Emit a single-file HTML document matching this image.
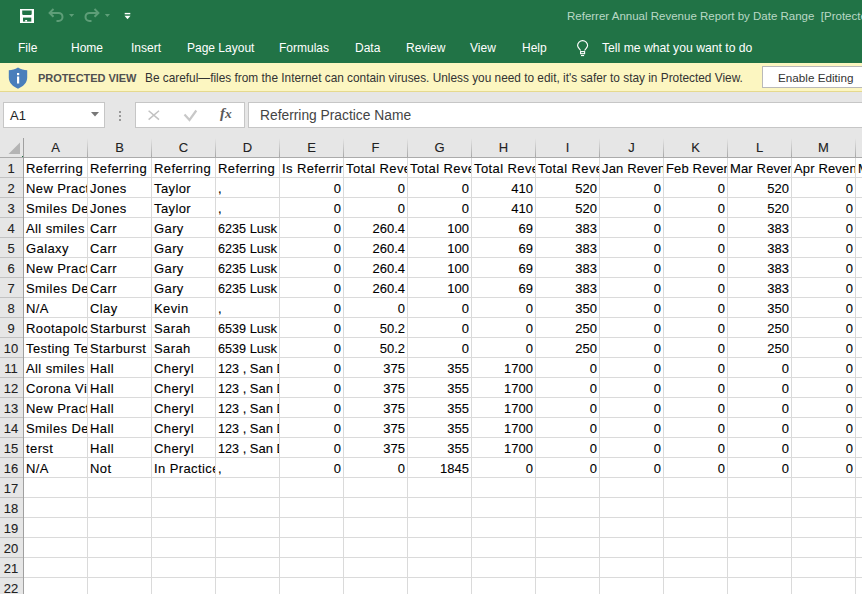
<!DOCTYPE html>
<html><head><meta charset="utf-8">
<style>
html,body{margin:0;padding:0;}
body{width:862px;height:594px;overflow:hidden;position:relative;background:#fff;font-family:"Liberation Sans",sans-serif;}
.abs{position:absolute;white-space:pre;}
#top{position:absolute;left:0;top:0;width:862px;height:63px;background:#217346;}
#pv{position:absolute;left:0;top:63px;width:862px;height:28px;background:#fcf6c1;border-bottom:1px solid #e5d98f;}
#fb{position:absolute;left:0;top:92px;width:862px;height:66px;background:#e6e6e6;}
.tab{position:absolute;top:40px;color:#fff;font-size:12px;line-height:16px;white-space:pre;}
.box{position:absolute;background:#fff;border:1px solid #c6c6c6;box-sizing:border-box;}
.vl{position:absolute;top:158px;width:1px;height:436px;background:#dadada;}
.hvl{position:absolute;top:138px;width:1px;height:19px;background:linear-gradient(#e6e6e6,#a8a8a8);}
.hl{position:absolute;left:24px;width:838px;height:1px;background:#dadada;}
.rhl{position:absolute;left:0;width:23px;height:1px;background:#c2c2c2;}
.rh{position:absolute;left:0;width:22px;height:19px;background:#e6e6e6;font-size:13px;line-height:21px;text-align:center;color:#222;-webkit-text-stroke:0.1px #222;}
.ch{position:absolute;top:138px;width:63px;height:19px;font-size:13px;line-height:19px;text-align:center;color:#222;-webkit-text-stroke:0.1px #222;}
.c{position:absolute;width:63px;height:19px;overflow:hidden;font-size:13px;line-height:21px;letter-spacing:0.4px;white-space:pre;-webkit-text-stroke:0.1px #000;color:#000;box-sizing:border-box;}
.t{padding-left:2px;}
.d{font-size:12.6px;letter-spacing:0;}
.n{text-align:right;padding-right:2px;font-size:13px;line-height:21px;letter-spacing:0;-webkit-text-stroke:0.1px #000;}
</style></head><body>
<div id="top"></div>
<!-- quick access toolbar -->
<svg class="abs" style="left:0;top:0" width="140" height="32" viewBox="0 0 140 32">
<rect x="20" y="9" width="14" height="14" fill="#fff"/>
<path d="M22.2 10.4H31.7V14.3L31 15H23L22.2 14.3Z" fill="#217346"/>
<rect x="23" y="17.6" width="8.3" height="4" fill="#217346"/>
<rect x="25.2" y="20" width="1.9" height="1.6" fill="#fff"/>
<g fill="none" stroke="#5e9e78" stroke-width="2">
<path d="M50.5 12.9H58.5A4 4 0 0 1 58.5 20.9H56.5"/>
<path d="M53.5 9L49.6 12.9L53.5 16.8"/>
<path d="M97.5 12.9H89.5A4 4 0 0 0 89.5 20.9H91.5"/>
<path d="M94.5 9L98.4 12.9L94.5 16.8"/>
</g>
<path d="M69 14H74.2L71.6 17Z" fill="#5e9e78"/>
<path d="M104.8 14H110L107.4 17Z" fill="#5e9e78"/>
<rect x="124.7" y="12.9" width="5.6" height="1.4" fill="#fff"/>
<path d="M124.5 15.7H130.5L127.5 19.2Z" fill="#fff"/>
</svg>
<svg class="abs" style="left:576px;top:39px" width="14" height="18" viewBox="0 0 14 18">
<path d="M4.6 11.5C3.5 9.8 1.6 8.5 1.6 6.6A5 5 0 0 1 11.6 6.6C11.6 8.5 9.7 9.8 8.6 11.5" fill="none" stroke="#fff" stroke-width="1.15"/>
<rect x="4.6" y="12.6" width="4" height="2.1" fill="none" stroke="#fff" stroke-width="1.1"/>
<rect x="5" y="16" width="3.1" height="1.1" fill="#fff"/>
</svg>
<div class="tab" style="left:18px">File</div>
<div class="tab" style="left:71px">Home</div>
<div class="tab" style="left:131px">Insert</div>
<div class="tab" style="left:187px">Page Layout</div>
<div class="tab" style="left:279px">Formulas</div>
<div class="tab" style="left:355px">Data</div>
<div class="tab" style="left:406px">Review</div>
<div class="tab" style="left:470px">View</div>
<div class="tab" style="left:522px">Help</div>
<div class="tab" style="left:602px;font-size:12.2px">Tell me what you want to do</div>
<div class="abs" style="left:567px;top:8px;font-size:11.5px;line-height:16px;color:#b9d8c5">Referrer Annual Revenue Report by Date Range  [Protected View] - Excel</div>

<div id="pv"></div>
<svg class="abs" style="left:8px;top:67px" width="20" height="22" viewBox="0 0 20 22">
<path d="M10 0.5 C7 2.5 4 3.2 0.8 3.2 V10.5 C0.8 16 5 19.5 10 21.7 C15 19.5 19.2 16 19.2 10.5 V3.2 C16 3.2 13 2.5 10 0.5Z" fill="#4a7ebb"/>
<rect x="9" y="6" width="2.2" height="2.2" fill="#fff"/>
<rect x="9" y="9.5" width="2.2" height="7" fill="#fff"/>
</svg>
<div class="abs" style="left:38px;top:70px;font-size:11px;line-height:16px;font-weight:bold;color:#505050;letter-spacing:-0.05px">PROTECTED VIEW</div>
<div class="abs" style="left:145px;top:70px;font-size:11.85px;line-height:16px;color:#333">Be careful—files from the Internet can contain viruses. Unless you need to edit, it's safer to stay in Protected View.</div>
<div class="box" style="left:762px;top:66px;width:110px;height:22px;border-color:#b9b9b9"></div>
<div class="abs" style="left:778px;top:70px;font-size:11.7px;line-height:16px;color:#333">Enable Editing</div>

<div id="fb"></div>
<div class="box" style="left:3px;top:102px;width:102px;height:26px"></div>
<div class="abs" style="left:10px;top:107px;font-size:13px;line-height:17px;color:#222">A1</div>
<svg class="abs" style="left:91px;top:112px" width="8" height="5"><path d="M0 0H8L4 4.5Z" fill="#777"/></svg>
<div class="abs" style="left:119px;top:111px;width:2px;height:2px;background:#999"></div>
<div class="abs" style="left:119px;top:115px;width:2px;height:2px;background:#999"></div>
<div class="abs" style="left:119px;top:119px;width:2px;height:2px;background:#999"></div>
<div class="box" style="left:135px;top:102px;width:110px;height:26px"></div>
<svg class="abs" style="left:140px;top:104px" width="100" height="22" viewBox="0 0 100 22">
<path d="M8.6 6.8L19 15.6M19 6.8L8.6 15.6" stroke="#c2c2c2" stroke-width="1.5" fill="none"/>
<path d="M44.5 10.5L49.5 16L56.3 6.5" stroke="#c8c8c8" stroke-width="2.2" fill="none"/>
</svg>
<div class="abs" style="left:220px;top:105px;font-family:'Liberation Serif',serif;font-style:italic;font-weight:bold;font-size:15px;line-height:17px;color:#5a5a5a">f<span style="font-size:13.5px;margin-left:0px">x</span></div>
<div class="box" style="left:248px;top:102px;width:620px;height:26px"></div>
<div class="abs" style="left:260px;top:107px;font-size:13.8px;line-height:17px;color:#444">Referring Practice Name</div>
<div class="abs" style="left:0;top:158px;width:23px;height:436px;background:#e6e6e6"></div>
<svg class="abs" style="left:8px;top:142px" width="13" height="13"><path d="M12 0.5V12H0.5Z" fill="#b4b4b4"/></svg>
<div class="vl" style="left:87px"></div>
<div class="hvl" style="left:87px"></div>
<div class="vl" style="left:151px"></div>
<div class="hvl" style="left:151px"></div>
<div class="vl" style="left:215px"></div>
<div class="hvl" style="left:215px"></div>
<div class="vl" style="left:279px"></div>
<div class="hvl" style="left:279px"></div>
<div class="vl" style="left:343px"></div>
<div class="hvl" style="left:343px"></div>
<div class="vl" style="left:407px"></div>
<div class="hvl" style="left:407px"></div>
<div class="vl" style="left:471px"></div>
<div class="hvl" style="left:471px"></div>
<div class="vl" style="left:535px"></div>
<div class="hvl" style="left:535px"></div>
<div class="vl" style="left:599px"></div>
<div class="hvl" style="left:599px"></div>
<div class="vl" style="left:663px"></div>
<div class="hvl" style="left:663px"></div>
<div class="vl" style="left:727px"></div>
<div class="hvl" style="left:727px"></div>
<div class="vl" style="left:791px"></div>
<div class="hvl" style="left:791px"></div>
<div class="vl" style="left:855px"></div>
<div class="hvl" style="left:855px"></div>
<div class="vl" style="left:919px"></div>
<div class="hvl" style="left:919px"></div>
<div class="hl" style="top:177px"></div>
<div class="rhl" style="top:177px"></div>
<div class="hl" style="top:197px"></div>
<div class="rhl" style="top:197px"></div>
<div class="hl" style="top:217px"></div>
<div class="rhl" style="top:217px"></div>
<div class="hl" style="top:237px"></div>
<div class="rhl" style="top:237px"></div>
<div class="hl" style="top:257px"></div>
<div class="rhl" style="top:257px"></div>
<div class="hl" style="top:277px"></div>
<div class="rhl" style="top:277px"></div>
<div class="hl" style="top:297px"></div>
<div class="rhl" style="top:297px"></div>
<div class="hl" style="top:317px"></div>
<div class="rhl" style="top:317px"></div>
<div class="hl" style="top:337px"></div>
<div class="rhl" style="top:337px"></div>
<div class="hl" style="top:357px"></div>
<div class="rhl" style="top:357px"></div>
<div class="hl" style="top:377px"></div>
<div class="rhl" style="top:377px"></div>
<div class="hl" style="top:397px"></div>
<div class="rhl" style="top:397px"></div>
<div class="hl" style="top:417px"></div>
<div class="rhl" style="top:417px"></div>
<div class="hl" style="top:437px"></div>
<div class="rhl" style="top:437px"></div>
<div class="hl" style="top:457px"></div>
<div class="rhl" style="top:457px"></div>
<div class="hl" style="top:477px"></div>
<div class="rhl" style="top:477px"></div>
<div class="hl" style="top:497px"></div>
<div class="rhl" style="top:497px"></div>
<div class="hl" style="top:517px"></div>
<div class="rhl" style="top:517px"></div>
<div class="hl" style="top:537px"></div>
<div class="rhl" style="top:537px"></div>
<div class="hl" style="top:557px"></div>
<div class="rhl" style="top:557px"></div>
<div class="hl" style="top:577px"></div>
<div class="rhl" style="top:577px"></div>
<div class="hl" style="top:597px"></div>
<div class="rhl" style="top:597px"></div>
<div class="rh" style="top:158px">1</div>
<div class="rh" style="top:178px">2</div>
<div class="rh" style="top:198px">3</div>
<div class="rh" style="top:218px">4</div>
<div class="rh" style="top:238px">5</div>
<div class="rh" style="top:258px">6</div>
<div class="rh" style="top:278px">7</div>
<div class="rh" style="top:298px">8</div>
<div class="rh" style="top:318px">9</div>
<div class="rh" style="top:338px">10</div>
<div class="rh" style="top:358px">11</div>
<div class="rh" style="top:378px">12</div>
<div class="rh" style="top:398px">13</div>
<div class="rh" style="top:418px">14</div>
<div class="rh" style="top:438px">15</div>
<div class="rh" style="top:458px">16</div>
<div class="rh" style="top:478px">17</div>
<div class="rh" style="top:498px">18</div>
<div class="rh" style="top:518px">19</div>
<div class="rh" style="top:538px">20</div>
<div class="rh" style="top:558px">21</div>
<div class="rh" style="top:578px">22</div>
<div class="ch" style="left:24px">A</div>
<div class="ch" style="left:88px">B</div>
<div class="ch" style="left:152px">C</div>
<div class="ch" style="left:216px">D</div>
<div class="ch" style="left:280px">E</div>
<div class="ch" style="left:344px">F</div>
<div class="ch" style="left:408px">G</div>
<div class="ch" style="left:472px">H</div>
<div class="ch" style="left:536px">I</div>
<div class="ch" style="left:600px">J</div>
<div class="ch" style="left:664px">K</div>
<div class="ch" style="left:728px">L</div>
<div class="ch" style="left:792px">M</div>
<div class="ch" style="left:856px">N</div>
<div class="c t" style="left:24px;top:158px">Referring</div>
<div class="c t" style="left:88px;top:158px">Referring</div>
<div class="c t" style="left:152px;top:158px">Referring</div>
<div class="c t" style="left:216px;top:158px">Referring</div>
<div class="c t" style="left:280px;top:158px">Is Referring Practice</div>
<div class="c t" style="left:344px;top:158px">Total Revenue</div>
<div class="c t" style="left:408px;top:158px">Total Revenue</div>
<div class="c t" style="left:472px;top:158px">Total Revenue</div>
<div class="c t" style="left:536px;top:158px">Total Revenue</div>
<div class="c t" style="left:600px;top:158px;letter-spacing:0.15px">Jan Revenue</div>
<div class="c t" style="left:664px;top:158px;letter-spacing:0.15px">Feb Revenue</div>
<div class="c t" style="left:728px;top:158px;letter-spacing:0.15px">Mar Revenue</div>
<div class="c t" style="left:792px;top:158px;letter-spacing:0.15px">Apr Revenue</div>
<div class="c t" style="left:856px;top:158px;letter-spacing:0.15px">May Revenue</div>
<div class="c t" style="left:24px;top:178px">New Practice</div>
<div class="c t" style="left:88px;top:178px">Jones</div>
<div class="c t" style="left:152px;top:178px">Taylor</div>
<div class="c t" style="left:216px;top:178px;letter-spacing:0">,</div>
<div class="c n" style="left:280px;top:178px">0</div>
<div class="c n" style="left:344px;top:178px">0</div>
<div class="c n" style="left:408px;top:178px">0</div>
<div class="c n" style="left:472px;top:178px">410</div>
<div class="c n" style="left:536px;top:178px">520</div>
<div class="c n" style="left:600px;top:178px">0</div>
<div class="c n" style="left:664px;top:178px">0</div>
<div class="c n" style="left:728px;top:178px">520</div>
<div class="c n" style="left:792px;top:178px">0</div>
<div class="c t" style="left:24px;top:198px">Smiles Dental</div>
<div class="c t" style="left:88px;top:198px">Jones</div>
<div class="c t" style="left:152px;top:198px">Taylor</div>
<div class="c t" style="left:216px;top:198px;letter-spacing:0">,</div>
<div class="c n" style="left:280px;top:198px">0</div>
<div class="c n" style="left:344px;top:198px">0</div>
<div class="c n" style="left:408px;top:198px">0</div>
<div class="c n" style="left:472px;top:198px">410</div>
<div class="c n" style="left:536px;top:198px">520</div>
<div class="c n" style="left:600px;top:198px">0</div>
<div class="c n" style="left:664px;top:198px">0</div>
<div class="c n" style="left:728px;top:198px">520</div>
<div class="c n" style="left:792px;top:198px">0</div>
<div class="c t" style="left:24px;top:218px">All smiles</div>
<div class="c t" style="left:88px;top:218px">Carr</div>
<div class="c t" style="left:152px;top:218px">Gary</div>
<div class="c t" style="left:216px;top:218px;letter-spacing:0"><span class="d">6235</span> Lusk Blvd</div>
<div class="c n" style="left:280px;top:218px">0</div>
<div class="c n" style="left:344px;top:218px">260.4</div>
<div class="c n" style="left:408px;top:218px">100</div>
<div class="c n" style="left:472px;top:218px">69</div>
<div class="c n" style="left:536px;top:218px">383</div>
<div class="c n" style="left:600px;top:218px">0</div>
<div class="c n" style="left:664px;top:218px">0</div>
<div class="c n" style="left:728px;top:218px">383</div>
<div class="c n" style="left:792px;top:218px">0</div>
<div class="c t" style="left:24px;top:238px">Galaxy</div>
<div class="c t" style="left:88px;top:238px">Carr</div>
<div class="c t" style="left:152px;top:238px">Gary</div>
<div class="c t" style="left:216px;top:238px;letter-spacing:0"><span class="d">6235</span> Lusk Blvd</div>
<div class="c n" style="left:280px;top:238px">0</div>
<div class="c n" style="left:344px;top:238px">260.4</div>
<div class="c n" style="left:408px;top:238px">100</div>
<div class="c n" style="left:472px;top:238px">69</div>
<div class="c n" style="left:536px;top:238px">383</div>
<div class="c n" style="left:600px;top:238px">0</div>
<div class="c n" style="left:664px;top:238px">0</div>
<div class="c n" style="left:728px;top:238px">383</div>
<div class="c n" style="left:792px;top:238px">0</div>
<div class="c t" style="left:24px;top:258px">New Practice</div>
<div class="c t" style="left:88px;top:258px">Carr</div>
<div class="c t" style="left:152px;top:258px">Gary</div>
<div class="c t" style="left:216px;top:258px;letter-spacing:0"><span class="d">6235</span> Lusk Blvd</div>
<div class="c n" style="left:280px;top:258px">0</div>
<div class="c n" style="left:344px;top:258px">260.4</div>
<div class="c n" style="left:408px;top:258px">100</div>
<div class="c n" style="left:472px;top:258px">69</div>
<div class="c n" style="left:536px;top:258px">383</div>
<div class="c n" style="left:600px;top:258px">0</div>
<div class="c n" style="left:664px;top:258px">0</div>
<div class="c n" style="left:728px;top:258px">383</div>
<div class="c n" style="left:792px;top:258px">0</div>
<div class="c t" style="left:24px;top:278px">Smiles Dental</div>
<div class="c t" style="left:88px;top:278px">Carr</div>
<div class="c t" style="left:152px;top:278px">Gary</div>
<div class="c t" style="left:216px;top:278px;letter-spacing:0"><span class="d">6235</span> Lusk Blvd</div>
<div class="c n" style="left:280px;top:278px">0</div>
<div class="c n" style="left:344px;top:278px">260.4</div>
<div class="c n" style="left:408px;top:278px">100</div>
<div class="c n" style="left:472px;top:278px">69</div>
<div class="c n" style="left:536px;top:278px">383</div>
<div class="c n" style="left:600px;top:278px">0</div>
<div class="c n" style="left:664px;top:278px">0</div>
<div class="c n" style="left:728px;top:278px">383</div>
<div class="c n" style="left:792px;top:278px">0</div>
<div class="c t" style="left:24px;top:298px">N/A</div>
<div class="c t" style="left:88px;top:298px">Clay</div>
<div class="c t" style="left:152px;top:298px">Kevin</div>
<div class="c t" style="left:216px;top:298px;letter-spacing:0">,</div>
<div class="c n" style="left:280px;top:298px">0</div>
<div class="c n" style="left:344px;top:298px">0</div>
<div class="c n" style="left:408px;top:298px">0</div>
<div class="c n" style="left:472px;top:298px">0</div>
<div class="c n" style="left:536px;top:298px">350</div>
<div class="c n" style="left:600px;top:298px">0</div>
<div class="c n" style="left:664px;top:298px">0</div>
<div class="c n" style="left:728px;top:298px">350</div>
<div class="c n" style="left:792px;top:298px">0</div>
<div class="c t" style="left:24px;top:318px">Rootapolcd</div>
<div class="c t" style="left:88px;top:318px">Starburst</div>
<div class="c t" style="left:152px;top:318px">Sarah</div>
<div class="c t" style="left:216px;top:318px;letter-spacing:0"><span class="d">6539</span> Lusk Blvd</div>
<div class="c n" style="left:280px;top:318px">0</div>
<div class="c n" style="left:344px;top:318px">50.2</div>
<div class="c n" style="left:408px;top:318px">0</div>
<div class="c n" style="left:472px;top:318px">0</div>
<div class="c n" style="left:536px;top:318px">250</div>
<div class="c n" style="left:600px;top:318px">0</div>
<div class="c n" style="left:664px;top:318px">0</div>
<div class="c n" style="left:728px;top:318px">250</div>
<div class="c n" style="left:792px;top:318px">0</div>
<div class="c t" style="left:24px;top:338px">Testing Test</div>
<div class="c t" style="left:88px;top:338px">Starburst</div>
<div class="c t" style="left:152px;top:338px">Sarah</div>
<div class="c t" style="left:216px;top:338px;letter-spacing:0"><span class="d">6539</span> Lusk Blvd</div>
<div class="c n" style="left:280px;top:338px">0</div>
<div class="c n" style="left:344px;top:338px">50.2</div>
<div class="c n" style="left:408px;top:338px">0</div>
<div class="c n" style="left:472px;top:338px">0</div>
<div class="c n" style="left:536px;top:338px">250</div>
<div class="c n" style="left:600px;top:338px">0</div>
<div class="c n" style="left:664px;top:338px">0</div>
<div class="c n" style="left:728px;top:338px">250</div>
<div class="c n" style="left:792px;top:338px">0</div>
<div class="c t" style="left:24px;top:358px">All smiles</div>
<div class="c t" style="left:88px;top:358px">Hall</div>
<div class="c t" style="left:152px;top:358px">Cheryl</div>
<div class="c t" style="left:216px;top:358px;letter-spacing:0"><span class="d">123</span> , San Diego</div>
<div class="c n" style="left:280px;top:358px">0</div>
<div class="c n" style="left:344px;top:358px">375</div>
<div class="c n" style="left:408px;top:358px">355</div>
<div class="c n" style="left:472px;top:358px">1700</div>
<div class="c n" style="left:536px;top:358px">0</div>
<div class="c n" style="left:600px;top:358px">0</div>
<div class="c n" style="left:664px;top:358px">0</div>
<div class="c n" style="left:728px;top:358px">0</div>
<div class="c n" style="left:792px;top:358px">0</div>
<div class="c t" style="left:24px;top:378px">Corona Vista</div>
<div class="c t" style="left:88px;top:378px">Hall</div>
<div class="c t" style="left:152px;top:378px">Cheryl</div>
<div class="c t" style="left:216px;top:378px;letter-spacing:0"><span class="d">123</span> , San Diego</div>
<div class="c n" style="left:280px;top:378px">0</div>
<div class="c n" style="left:344px;top:378px">375</div>
<div class="c n" style="left:408px;top:378px">355</div>
<div class="c n" style="left:472px;top:378px">1700</div>
<div class="c n" style="left:536px;top:378px">0</div>
<div class="c n" style="left:600px;top:378px">0</div>
<div class="c n" style="left:664px;top:378px">0</div>
<div class="c n" style="left:728px;top:378px">0</div>
<div class="c n" style="left:792px;top:378px">0</div>
<div class="c t" style="left:24px;top:398px">New Practice</div>
<div class="c t" style="left:88px;top:398px">Hall</div>
<div class="c t" style="left:152px;top:398px">Cheryl</div>
<div class="c t" style="left:216px;top:398px;letter-spacing:0"><span class="d">123</span> , San Diego</div>
<div class="c n" style="left:280px;top:398px">0</div>
<div class="c n" style="left:344px;top:398px">375</div>
<div class="c n" style="left:408px;top:398px">355</div>
<div class="c n" style="left:472px;top:398px">1700</div>
<div class="c n" style="left:536px;top:398px">0</div>
<div class="c n" style="left:600px;top:398px">0</div>
<div class="c n" style="left:664px;top:398px">0</div>
<div class="c n" style="left:728px;top:398px">0</div>
<div class="c n" style="left:792px;top:398px">0</div>
<div class="c t" style="left:24px;top:418px">Smiles Dental</div>
<div class="c t" style="left:88px;top:418px">Hall</div>
<div class="c t" style="left:152px;top:418px">Cheryl</div>
<div class="c t" style="left:216px;top:418px;letter-spacing:0"><span class="d">123</span> , San Diego</div>
<div class="c n" style="left:280px;top:418px">0</div>
<div class="c n" style="left:344px;top:418px">375</div>
<div class="c n" style="left:408px;top:418px">355</div>
<div class="c n" style="left:472px;top:418px">1700</div>
<div class="c n" style="left:536px;top:418px">0</div>
<div class="c n" style="left:600px;top:418px">0</div>
<div class="c n" style="left:664px;top:418px">0</div>
<div class="c n" style="left:728px;top:418px">0</div>
<div class="c n" style="left:792px;top:418px">0</div>
<div class="c t" style="left:24px;top:438px">terst</div>
<div class="c t" style="left:88px;top:438px">Hall</div>
<div class="c t" style="left:152px;top:438px">Cheryl</div>
<div class="c t" style="left:216px;top:438px;letter-spacing:0"><span class="d">123</span> , San Diego</div>
<div class="c n" style="left:280px;top:438px">0</div>
<div class="c n" style="left:344px;top:438px">375</div>
<div class="c n" style="left:408px;top:438px">355</div>
<div class="c n" style="left:472px;top:438px">1700</div>
<div class="c n" style="left:536px;top:438px">0</div>
<div class="c n" style="left:600px;top:438px">0</div>
<div class="c n" style="left:664px;top:438px">0</div>
<div class="c n" style="left:728px;top:438px">0</div>
<div class="c n" style="left:792px;top:438px">0</div>
<div class="c t" style="left:24px;top:458px">N/A</div>
<div class="c t" style="left:88px;top:458px">Not</div>
<div class="c t" style="left:152px;top:458px">In Practice</div>
<div class="c t" style="left:216px;top:458px;letter-spacing:0">,</div>
<div class="c n" style="left:280px;top:458px">0</div>
<div class="c n" style="left:344px;top:458px">0</div>
<div class="c n" style="left:408px;top:458px">1845</div>
<div class="c n" style="left:472px;top:458px">0</div>
<div class="c n" style="left:536px;top:458px">0</div>
<div class="c n" style="left:600px;top:458px">0</div>
<div class="c n" style="left:664px;top:458px">0</div>
<div class="c n" style="left:728px;top:458px">0</div>
<div class="c n" style="left:792px;top:458px">0</div>
<div class="abs" style="left:22px;top:156px;width:1px;height:1px;background:#217346"></div>
<div class="abs" style="left:0;top:157px;width:862px;height:1px;background:#ababab"></div>
<div class="abs" style="left:23px;top:138px;width:1px;height:456px;background:#a0a0a0"></div>
</body></html>
